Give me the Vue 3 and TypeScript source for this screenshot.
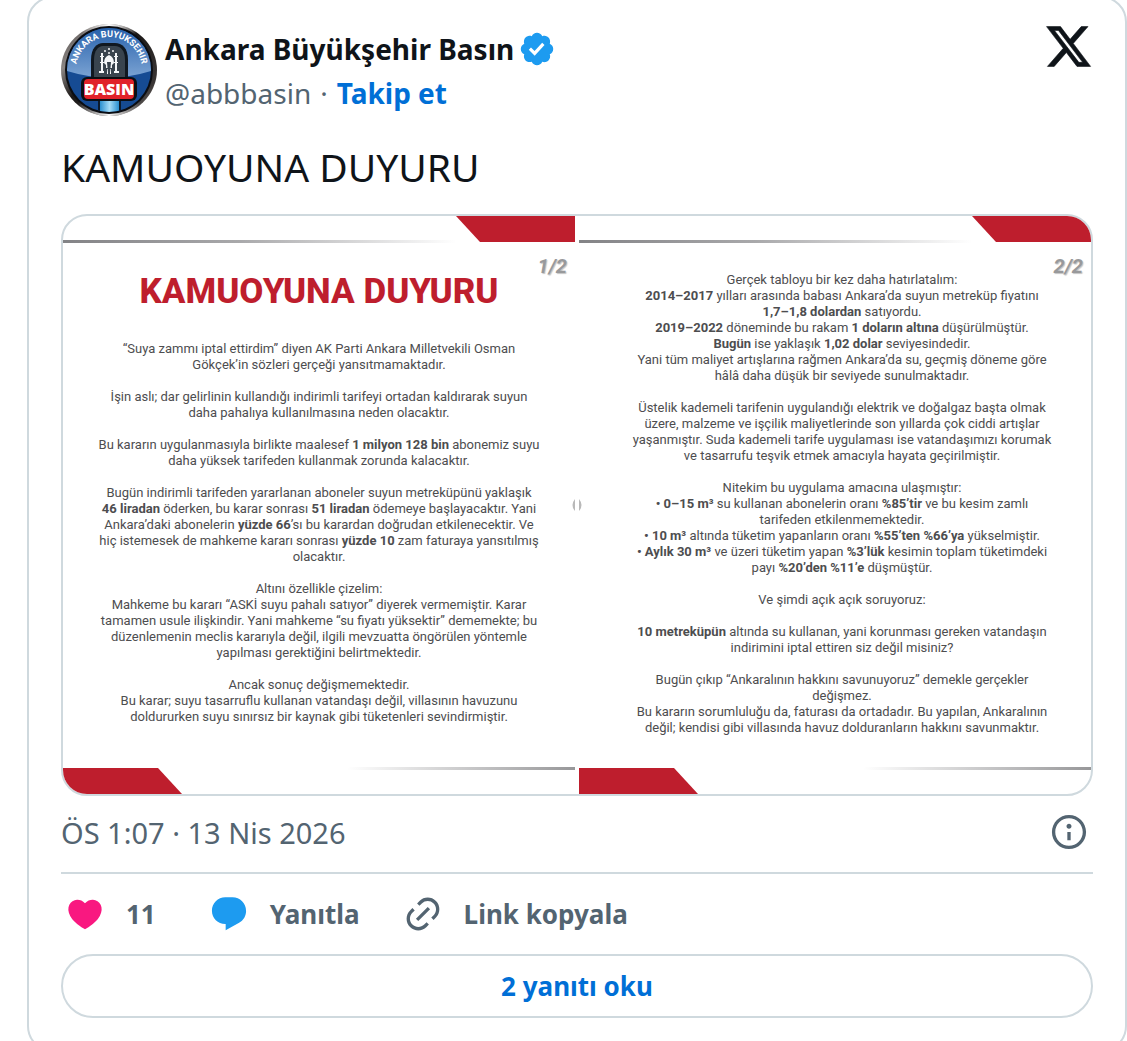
<script setup lang="ts">
interface Segment {
  text: string
  bold: boolean
}

interface Sheet {
  page: string
  title?: string
  lines: string[]
}

const sheets: Sheet[] = [
  {
    page: '1/2',
    title: 'KAMUOYUNA DUYURU',
    lines: [
      '“Suya zammı iptal ettirdim” diyen AK Parti Ankara Milletvekili Osman',
      'Gökçek’in sözleri gerçeği yansıtmamaktadır.',
      '',
      'İşin aslı; dar gelirlinin kullandığı indirimli tarifeyi ortadan kaldırarak suyun',
      'daha pahalıya kullanılmasına neden olacaktır.',
      '',
      'Bu kararın uygulanmasıyla birlikte maalesef *1 milyon 128 bin* abonemiz suyu',
      'daha yüksek tarifeden kullanmak zorunda kalacaktır.',
      '',
      'Bugün indirimli tarifeden yararlanan aboneler suyun metreküpünü yaklaşık',
      '*46 liradan* öderken, bu karar sonrası *51 liradan* ödemeye başlayacaktır. Yani',
      'Ankara’daki abonelerin *yüzde 66*’sı bu karardan doğrudan etkilenecektir. Ve',
      'hiç istemesek de mahkeme kararı sonrası *yüzde 10* zam faturaya yansıtılmış',
      'olacaktır.',
      '',
      'Altını özellikle çizelim:',
      'Mahkeme bu kararı “ASKİ suyu pahalı satıyor” diyerek vermemiştir. Karar',
      'tamamen usule ilişkindir. Yani mahkeme “su fiyatı yüksektir” dememekte; bu',
      'düzenlemenin meclis kararıyla değil, ilgili mevzuatta öngörülen yöntemle',
      'yapılması gerektiğini belirtmektedir.',
      '',
      'Ancak sonuç değişmemektedir.',
      'Bu karar; suyu tasarruflu kullanan vatandaşı değil, villasının havuzunu',
      'doldururken suyu sınırsız bir kaynak gibi tüketenleri sevindirmiştir.',
    ],
  },
  {
    page: '2/2',
    lines: [
      'Gerçek tabloyu bir kez daha hatırlatalım:',
      '*2014–2017* yılları arasında babası Ankara’da suyun metreküp fiyatını',
      '*1,7–1,8 dolardan* satıyordu.',
      '*2019–2022* döneminde bu rakam *1 doların altına* düşürülmüştür.',
      '*Bugün* ise yaklaşık *1,02 dolar* seviyesindedir.',
      'Yani tüm maliyet artışlarına rağmen Ankara’da su, geçmiş döneme göre',
      'hâlâ daha düşük bir seviyede sunulmaktadır.',
      '',
      'Üstelik kademeli tarifenin uygulandığı elektrik ve doğalgaz başta olmak',
      'üzere, malzeme ve işçilik maliyetlerinde son yıllarda çok ciddi artışlar',
      'yaşanmıştır. Suda kademeli tarife uygulaması ise vatandaşımızı korumak',
      've tasarrufu teşvik etmek amacıyla hayata geçirilmiştir.',
      '',
      'Nitekim bu uygulama amacına ulaşmıştır:',
      '*• 0–15 m³* su kullanan abonelerin oranı *%85’tir* ve bu kesim zamlı',
      'tarifeden etkilenmemektedir.',
      '*• 10 m³* altında tüketim yapanların oranı *%55’ten %66’ya* yükselmiştir.',
      '*• Aylık 30 m³* ve üzeri tüketim yapan *%3’lük* kesimin toplam tüketimdeki',
      'payı *%20’den %11’e* düşmüştür.',
      '',
      'Ve şimdi açık açık soruyoruz:',
      '',
      '*10 metreküpün* altında su kullanan, yani korunması gereken vatandaşın',
      'indirimini iptal ettiren siz değil misiniz?',
      '',
      'Bugün çıkıp “Ankaralının hakkını savunuyoruz” demekle gerçekler',
      'değişmez.',
      'Bu kararın sorumluluğu da, faturası da ortadadır. Bu yapılan, Ankaralının',
      'değil; kendisi gibi villasında havuz dolduranların hakkını savunmaktır.',
    ],
  },
]

// Text between asterisks is set in bold.
function segments(line: string): Segment[] {
  return line
    .split('*')
    .map((text, i) => ({ text, bold: i % 2 === 1 }))
    .filter((s) => s.text !== '')
}
</script>

<template>
  <main class="page">
    <article class="card">
      <header class="head">
        <a class="avatar" href="#" aria-label="Ankara Büyükşehir Basın">
          <svg viewBox="0 0 96 96" width="96" height="96">
            <defs>
              <linearGradient id="rim" x1="0" y1="0" x2="1" y2="1">
                <stop offset="0" stop-color="#4a4543" />
                <stop offset=".25" stop-color="#8c8785" />
                <stop offset=".45" stop-color="#1b1817" />
                <stop offset=".8" stop-color="#3a3635" />
                <stop offset="1" stop-color="#8c8785" />
              </linearGradient>
              <radialGradient id="shineTop" cx=".5" cy="0" r=".3">
                <stop offset="0" stop-color="#fff" />
                <stop offset="1" stop-color="#fff" stop-opacity="0" />
              </radialGradient>
              <radialGradient id="shineBottom" cx=".5" cy="1" r=".35">
                <stop offset="0" stop-color="#fff" />
                <stop offset="1" stop-color="#fff" stop-opacity="0" />
              </radialGradient>
              <linearGradient id="sky" x1="0" y1="0" x2="0" y2="1">
                <stop offset="0" stop-color="#1f5ba8" />
                <stop offset="1" stop-color="#7ba3d3" />
              </linearGradient>
              <linearGradient id="stem" x1="0" y1="0" x2="1" y2="0">
                <stop offset="0" stop-color="#2a8fd0" />
                <stop offset=".5" stop-color="#a5dcf7" />
                <stop offset="1" stop-color="#2a8fd0" />
              </linearGradient>
              <clipPath id="disc"><circle cx="48" cy="48" r="42" /></clipPath>
              <path id="arc" d="M16 56A33 33 0 1 1 80 56" />
            </defs>
            <ellipse cx="48" cy="48" rx="48" ry="46" fill="url(#rim)" />
            <ellipse cx="48" cy="48" rx="48" ry="46" fill="url(#shineTop)" />
            <ellipse cx="48" cy="48" rx="48" ry="46" fill="url(#shineBottom)" />
            <circle cx="48" cy="48" r="44" fill="#0b0d12" />
            <g clip-path="url(#disc)">
              <rect width="96" height="96" fill="#164b93" />
              <path d="M0 0H96V47Q48 64 0 47Z" fill="url(#sky)" />
              <rect x="37" y="70" width="23" height="26" fill="#0c1a2c" />
              <rect x="39" y="76" width="19" height="20" fill="url(#stem)" />
            </g>
            <path d="M30 58V38C30 26 36 21 42 21H54C61 21 67 26 67 38V58Z" fill="#101820" />
            <path d="M33 56V38C33 29 37 24 42 24H54C60 24 64 29 64 38V56Z" fill="#39444e" />
            <g fill="#f4f6f8">
              <path d="M40 31h2v20h-2zM54 31h2v20h-2z" />
              <path d="M39 34h4v1h-4zM53 34h4v1h-4zM39 40h4v1h-4zM53 40h4v1h-4zM38 49h5v2h-5zM53 49h5v2h-5z" />
              <path d="M43 41q0-6 5-8 5 2 5 8l-2 2v3h-6v-3z" />
              <path d="M46 47h1v5h-1zM49 47h1v5h-1z" />
              <circle cx="44" cy="29" r="1" /><circle cx="48" cy="31" r="1" />
              <circle cx="52" cy="29" r="1" /><circle cx="48" cy="27" r="1" />
            </g>
            <path d="M46 40h4l-1 11h-2z" fill="#39444e" />
            <rect x="20" y="55" width="56" height="24" rx="6" fill="#0c0f14" />
            <rect x="23" y="57" width="50" height="20" rx="4" fill="#e02229" />
            <text class="avatar-word" x="48" y="73" text-anchor="middle">BASIN</text>
            <text class="avatar-arc"><textPath href="#arc" startOffset="50%" text-anchor="middle">ANKARA BUYUKSEHIR</textPath></text>
          </svg>
        </a>
        <div class="who">
          <a class="name" href="#">
            <span>Ankara Büyükşehir Basın</span>
            <svg class="badge" viewBox="0 0 22 22" width="38" height="38" aria-label="Onaylı hesap">
              <path fill="#1d9bf0" d="M20.396 11c-.018-.646-.215-1.275-.57-1.816-.354-.54-.852-.972-1.438-1.246.223-.607.27-1.264.14-1.897-.131-.634-.437-1.218-.882-1.687-.47-.445-1.053-.75-1.687-.882-.633-.13-1.29-.083-1.897.14-.273-.587-.704-1.086-1.245-1.44S11.647 1.62 11 1.604c-.646.017-1.273.213-1.813.568s-.969.854-1.24 1.44c-.608-.223-1.267-.272-1.902-.14-.635.13-1.22.436-1.69.882-.445.47-.749 1.055-.878 1.688-.13.633-.08 1.29.144 1.896-.587.274-1.087.705-1.443 1.245-.356.54-.555 1.17-.574 1.817.02.647.218 1.276.574 1.817.356.54.856.972 1.443 1.245-.224.606-.274 1.263-.144 1.896.13.634.433 1.218.877 1.688.47.443 1.054.747 1.687.878.633.132 1.29.084 1.897-.136.274.586.705 1.084 1.246 1.439.54.354 1.17.551 1.816.569.647-.016 1.276-.213 1.817-.567s.972-.854 1.245-1.44c.604.239 1.266.296 1.903.164.636-.132 1.22-.447 1.68-.907.46-.46.776-1.044.908-1.681s.075-1.299-.165-1.903c.586-.274 1.084-.705 1.439-1.246.354-.54.551-1.17.569-1.816zM9.662 14.85l-3.429-3.428 1.293-1.302 2.072 2.072 4.4-4.794 1.347 1.246z" />
            </svg>
          </a>
          <div class="sub">
            <a class="handle" href="#">@abbbasin</a>
            <span class="dot">·</span>
            <a class="follow" href="#">Takip et</a>
          </div>
        </div>
        <a class="logo" href="#" aria-label="X">
          <svg viewBox="0 0 24 24" width="49" height="49">
            <path fill="#0f1419" stroke="#0f1419" stroke-width=".3" d="M18.244 2.25h3.308l-7.227 8.26 8.502 11.24H16.17l-5.214-6.817L4.99 21.75H1.68l7.73-8.835L1.254 2.25H8.08l4.713 6.231zm-1.161 17.52h1.833L7.084 4.126H5.117z" />
          </svg>
        </a>
      </header>

      <p class="body">KAMUOYUNA DUYURU</p>

      <div class="media">
        <section v-for="(sheet, i) in sheets" :key="sheet.page" class="sheet" :class="i === 0 ? 'first' : 'second'">
          <div class="band top"><span class="rule" /><span class="flag" /></div>
          <span class="page-no">{{ sheet.page }}</span>
          <h2 v-if="sheet.title" class="title">{{ sheet.title }}</h2>
          <div class="copy">
            <p v-for="(line, n) in sheet.lines" :key="n" class="line">
              <template v-for="(s, k) in segments(line)" :key="k">
                <strong v-if="s.bold">{{ s.text }}</strong>
                <template v-else>{{ s.text }}</template>
              </template>
            </p>
          </div>
          <div class="band bottom"><span class="flag" /><span class="rule" /></div>
          <svg class="notch" viewBox="0 0 3 12" width="3" height="12" aria-hidden="true">
            <path d="M3 0Q-2 6 3 12Z" fill="#b9b9b9" />
          </svg>
        </section>
      </div>

      <div class="meta">
        <a class="time" href="#">ÖS 1:07 · 13 Nis 2026</a>
        <a class="info" href="#" aria-label="Bilgi">
          <svg viewBox="0 0 24 24" width="40" height="40">
            <path fill="#536471" d="M13.5 8.5c0 .83-.67 1.5-1.5 1.5s-1.500-.67-1.500-1.500S11.170 7 12 7s1.500.67 1.500 1.500zM13 17v-5h-2v5h2zm-1 5.250c5.660 0 10.250-4.590 10.250-10.250S17.660 1.750 12 1.750 1.750 6.340 1.750 12 6.340 22.250 12 22.250zM20.250 12c0 4.560-3.690 8.250-8.250 8.250S3.750 16.560 3.750 12 7.440 3.750 12 3.750s8.250 3.690 8.250 8.250z" />
          </svg>
        </a>
      </div>

      <div class="actions">
        <button class="action like" type="button">
          <svg viewBox="0 0 24 24" width="40" height="40">
            <path fill="#f91880" d="M20.884 13.190c-1.351 2.480-4.001 5.120-8.379 7.670l-.503.3-.504-.3c-4.379-2.550-7.029-5.190-8.382-7.670-1.360-2.500-1.410-4.860-.514-6.670.887-1.790 2.647-2.910 4.601-3.010 1.651-.09 3.368.56 4.798 2.010 1.429-1.450 3.146-2.100 4.796-2.010 1.954.1 3.714 1.220 4.601 3.010.896 1.810.846 4.170-.514 6.670z" />
          </svg>
          <span>11</span>
        </button>
        <button class="action reply" type="button">
          <svg viewBox="0 0 24 24" width="40" height="40">
            <path fill="#1d9bf0" d="M1.751 10c0-4.420 3.584-8 8.005-8h4.366c4.490 0 8.129 3.640 8.129 8.130 0 2.960-1.607 5.680-4.196 7.110l-8.054 4.460v-3.690h-.067c-4.490.1-8.183-3.510-8.183-8.010z" />
          </svg>
          <span>Yanıtla</span>
        </button>
        <button class="action copy-link" type="button">
          <svg viewBox="0 0 24 24" width="40" height="40">
            <path fill="#536471" d="M18.360 5.640c-1.950-1.960-5.110-1.960-7.070 0L9.880 7.050 8.460 5.640l1.420-1.420c2.730-2.730 7.160-2.730 9.900 0 2.730 2.740 2.730 7.170 0 9.900l-1.420 1.420-1.410-1.420 1.410-1.410c1.960-1.960 1.960-5.120 0-7.070zm-2.120 3.530l-7.070 7.070-1.410-1.410 7.070-7.070 1.410 1.410zm-12.020.71l1.420-1.420 1.410 1.420-1.410 1.410c-1.960 1.960-1.960 5.120 0 7.070 1.950 1.960 5.110 1.960 7.070 0l1.410-1.410 1.420 1.410-1.420 1.420c-2.730 2.730-7.160 2.730-9.900 0-2.730-2.740-2.730-7.170 0-9.900z" />
          </svg>
          <span>Link kopyala</span>
        </button>
      </div>

      <button class="read" type="button">2 yanıtı oku</button>
    </article>
  </main>
</template>

<style>
body {
  margin: 0;
  background: #fff;
}
</style>

<style scoped>
.page {
  box-sizing: border-box;
  height: 100vh;
  overflow: hidden;
  padding-left: 27px;
  font-family: "Noto Sans", "Open Sans", sans-serif;
  color: #0f1419;
}
.card {
  margin-top: -4px;
  padding: 24px 32px 32px;
  border: 2px solid #cfd9de;
  border-radius: 26px;
  background: #fff;
}
a {
  color: inherit;
  text-decoration: none;
}
svg {
  display: block;
  flex: none;
}
.head {
  display: flex;
  align-items: flex-start;
}
.avatar {
  margin-right: 8px;
}
.avatar-word {
  font: 800 16px "Open Sans", sans-serif;
  fill: #fff;
}
.avatar-arc {
  font: 700 9px Roboto, sans-serif;
  fill: #fff;
}
.who {
  flex: 1;
  padding-top: 5px;
}
.name {
  display: flex;
  align-items: center;
  gap: 4px;
  height: 44px;
  font-size: 28px;
  font-weight: 700;
  white-space: nowrap;
}
.sub {
  display: flex;
  gap: 9px;
  font-size: 28px;
  line-height: 44px;
  color: #536471;
}
.follow {
  font-weight: 700;
  color: #006fd6;
}
.body {
  margin: 23px 0 21px;
  font-size: 39px;
  line-height: 52px;
}
.media {
  display: flex;
  gap: 4px;
  overflow: hidden;
  border: 2px solid #cfd9de;
  border-radius: 26px;
}
.sheet {
  position: relative;
  display: flex;
  flex: 1;
  flex-direction: column;
  min-width: 0;
  height: 578px;
  font-family: Roboto, "Noto Sans", sans-serif;
  color: #4d4d4f;
}
.band {
  display: flex;
  height: 26px;
}
.flag {
  width: 119px;
  background: #be1e2d;
}
.rule {
  flex: 1;
  height: 3px;
}
.top .rule {
  align-self: flex-end;
  margin-bottom: -1px;
  background: linear-gradient(90deg, #838386, #a9a9ab 45%, #fff);
}
.top .flag {
  clip-path: polygon(0 0, 100% 0, 100% 100%, 24px 100%);
}
.bottom {
  margin-top: auto;
}
.bottom .flag {
  clip-path: polygon(0 0, 95px 0, 100% 100%, 0 100%);
}
.bottom .rule {
  margin-top: -1px;
  background: linear-gradient(90deg, #fff 42%, #979799);
}
.page-no {
  position: absolute;
  top: 38px;
  right: 8px;
  font-size: 20px;
  font-style: italic;
  font-weight: 700;
  line-height: 24px;
  color: #98999b;
  text-shadow: 1px 1px 1px #c4c4c4;
}
.title {
  margin: 28px 0 0;
  font-size: 35px;
  font-weight: 800;
  line-height: 44px;
  text-align: center;
  color: #be1e2d;
}
.copy {
  margin-top: 27px;
}
.second .copy {
  margin-top: 30px;
  padding-left: 14px;
}
.line {
  min-height: 16px;
  margin: 0;
  font-size: 13px;
  line-height: 16px;
  text-align: center;
  white-space: nowrap;
}
.notch {
  position: absolute;
  top: 283px;
  right: 0;
}
.second .notch {
  right: auto;
  left: 0;
  transform: rotate(180deg);
}
.meta {
  display: flex;
  align-items: center;
  justify-content: space-between;
  height: 72px;
  padding: 0 4px 4px 0;
  border-bottom: 2px solid #cfd9de;
  font-size: 29px;
  color: #536471;
}
.actions {
  display: flex;
  align-items: center;
  height: 80px;
  padding-left: 4px;
}
.action {
  display: flex;
  align-items: center;
  gap: 21px;
  padding: 0;
  border: 0;
  background: none;
  font: 700 26px "Noto Sans", sans-serif;
  color: #536471;
}
.like {
  margin-right: 53px;
}
.reply {
  margin-right: 43px;
}
.read {
  display: block;
  width: 100%;
  height: 64px;
  border: 2px solid #cfd9de;
  border-radius: 32px;
  background: #fff;
  font: 700 26px "Noto Sans", sans-serif;
  color: #006fd6;
}
</style>
